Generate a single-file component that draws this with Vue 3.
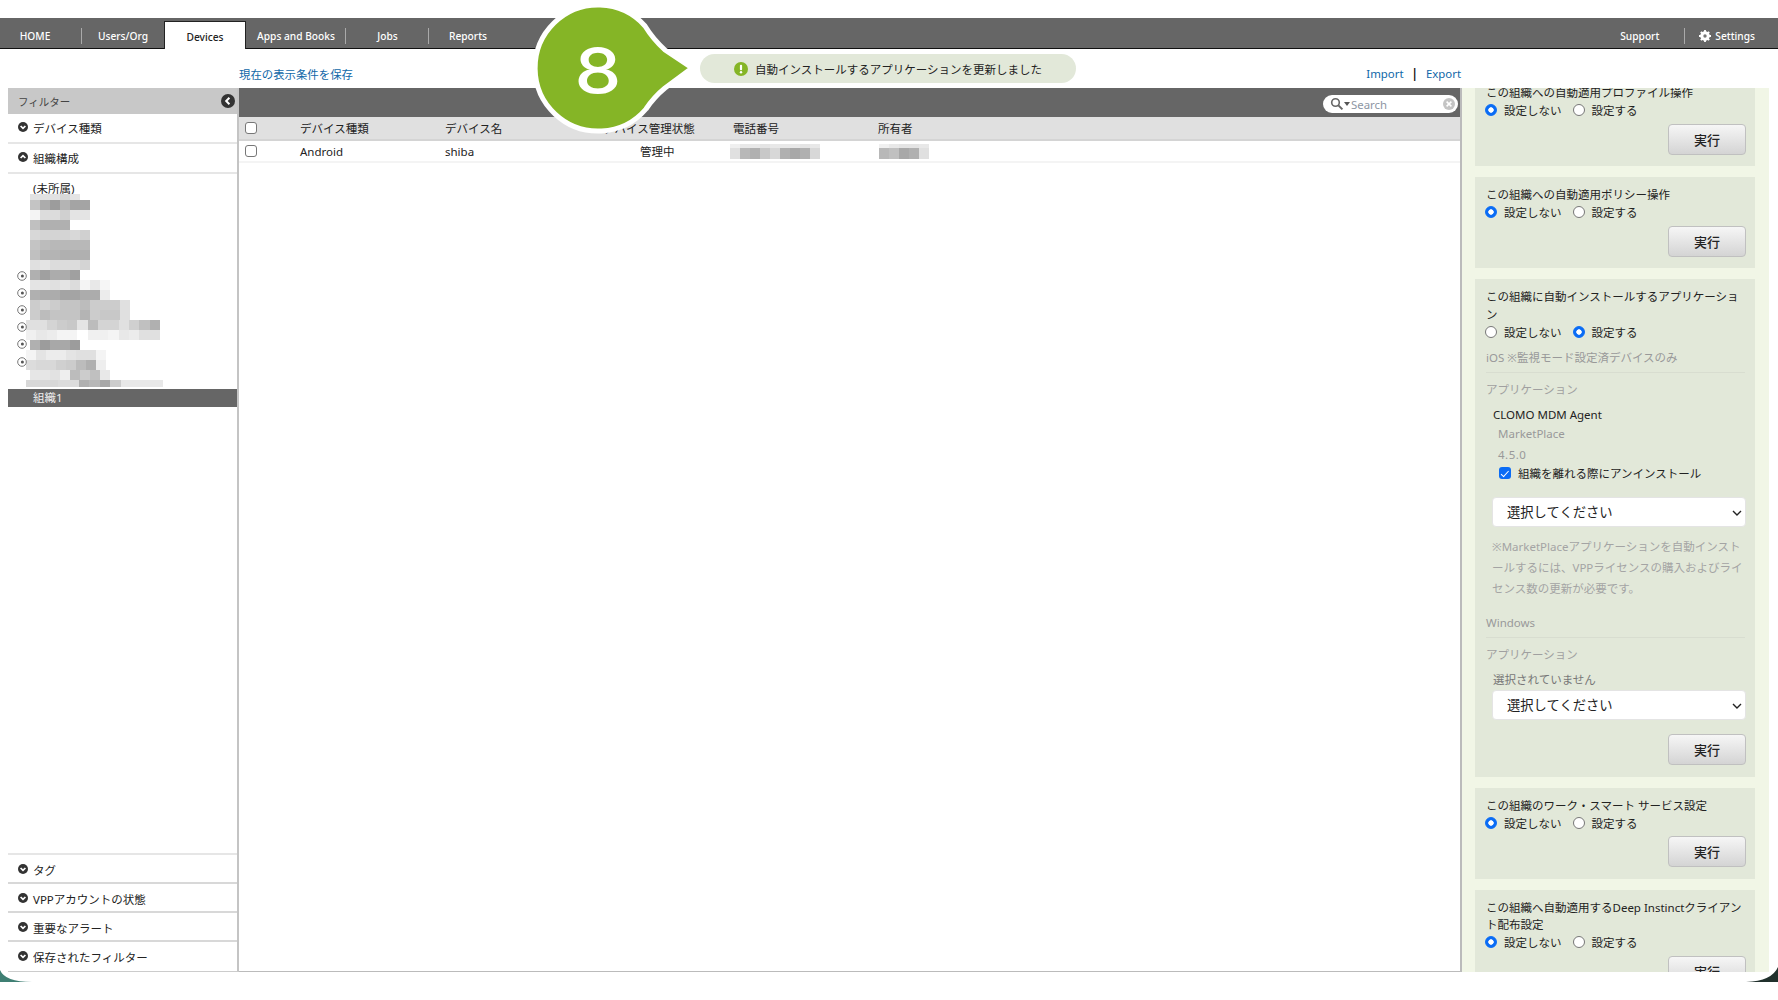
<script setup>
const navLeft = [
  { label: 'HOME', cls: 'home' },
  { label: 'Users/Org', cls: 'users' },
  { label: 'Devices', cls: 'active' },
  { label: 'Apps and Books', cls: 'apps' },
  { label: 'Jobs', cls: 'jobs' },
  { label: 'Reports', cls: 'reports' }
];

const bottomFilters = ['タグ', 'VPPアカウントの状態', '重要なアラート', '保存されたフィルター'];

// blurred org names, each row is a list of grey levels
const treeRows = [
  { h: 6, x: 30, c: ['e2', 'e2', 'e2', 'd8', 'e4'] },
  { h: 10, x: 30, c: ['c4', 'ac', '9c', 'b4', 'a4', 'a4'] },
  { h: 10, x: 30, c: ['f4', 'dc', 'dc', 'd0', 'e4', 'e4'] },
  { h: 10, x: 30, c: ['c0', 'b0', 'b0', 'b0'] },
  { h: 10, x: 30, c: ['d8', 'd4', 'd4', 'd4', 'd8', 'd0'] },
  { h: 10, x: 30, c: ['c4', 'bc', 'b8', 'b8', 'b8', 'b8'] },
  { h: 10, x: 30, c: ['c0', 'b4', 'b4', 'b0', 'b0', 'b0'] },
  { h: 10, x: 30, c: ['e0', 'e4', 'dc', 'dc', 'dc', 'd4'] },
  { h: 10, x: 30, c: ['b0', 'a0', 'ac', 'ac', 'a0'] },
  { h: 10, x: 30, c: ['e4', 'e4', 'e0', 'e4', 'dc', 'f4', 'e8', 'f6'] },
  { h: 10, x: 30, c: ['b0', 'ac', 'ac', 'a4', 'a4', 'ac', 'ac', 'ec'] },
  { h: 10, x: 30, c: ['cc', 'd4', 'cc', 'c4', 'c4', 'bc', 'cc', 'cc', 'cc', 'e0'] },
  { h: 10, x: 30, c: ['cc', 'bc', 'c4', 'c4', 'c4', 'b4', 'cc', 'c8', 'c8', 'e0'] },
  { h: 10, x: 26, w: 10.3, c: ['e0', 'e0', 'd4', 'cc', 'c8', 'e4', 'bc', 'd4', 'd4', 'e0', 'd0', 'c0', 'b0'] },
  { h: 10, x: 26, w: 10.3, c: ['f0', 'e8', 'ec', 'f4', 'f4', 'ff', 'f0', 'f0', 'f4', 'e8', 'ec', 'e0', 'e0'] },
  { h: 10, x: 30, c: ['b0', '9c', 'a8', 'a8', '9c'] },
  { h: 10, x: 26, c: ['f4', 'e4', 'ec', 'ec', 'e4', 'e0', 'e0', 'f4'] },
  { h: 10, x: 26, c: ['dc', 'd8', 'd8', 'd0', 'cc', 'bc', 'b0', 'ee'] },
  { h: 10, x: 30, c: ['e6', 'e6', 'e2', 'ee', 'bc', 'cc', 'c0', 'e8'] },
  { h: 7, x: 26, w: 10.5, c: ['d8', 'd8', 'd8', 'dc', 'dc', 'b0', 'b8', 'a8', 'cc', 'e8', 'e8', 'e8', 'e8'] }
];
const treeToggles = [276, 293, 310, 327, 344, 362];

const phoneBlur = [
  ['f0', 'e8', 'e8', 'e4', 'e8', 'e8', 'e8', 'e4', 'e8'],
  ['e0', 'b8', 'b0', 'c8', 'd8', 'b0', 'a8', 'b0', 'd8']
];
const ownerBlur = [
  ['f0', 'e8', 'e4', 'e4', 'e8'],
  ['b8', 'c0', 'a8', 'b0', 'e0']
];

const cell = (g, w = 10) => ({ width: w + 'px', background: '#' + g + g + g });
</script>

<template>
  <div class="page">
    <nav class="topbar">
      <a v-for="n in navLeft" :key="n.label" :class="['tab', n.cls]">{{ n.label }}</a>
      <div class="nav-right">
        <a class="support">Support</a>
        <a class="settings">
          <svg width="12" height="12" viewBox="0 0 12 12">
            <circle cx="6" cy="6" r="4.8" fill="#fff" />
            <path d="M6 0v12M0 6h12M1.8 1.8l8.4 8.4M10.2 1.8l-8.4 8.4" stroke="#fff" stroke-width="1.8" />
            <circle cx="6" cy="6" r="1.7" fill="#777" />
          </svg>
          Settings
        </a>
      </div>
    </nav>

    <div class="toolbar">
      <a class="link save">現在の表示条件を保存</a>
      <div class="toast">
        <svg width="14" height="14" viewBox="0 0 14 14">
          <circle cx="7" cy="7" r="7" fill="#85b526" />
          <rect x="5.9" y="2.8" width="2.2" height="5.4" rx="1" fill="#fff" />
          <circle cx="7" cy="10.3" r="1.2" fill="#fff" />
        </svg>
        自動インストールするアプリケーションを更新しました
      </div>
      <div class="io">
        <a class="link">Import</a><span class="bar">|</span><a class="link">Export</a>
      </div>
    </div>

    <div class="content">
      <aside class="sidebar">
        <div class="filter-head">
          フィルター
          <svg width="14" height="14" viewBox="0 0 14 14">
            <circle cx="7" cy="7" r="7" fill="#333" />
            <path d="M8.4 3.8 5.2 7l3.2 3.2" fill="none" stroke="#fff" stroke-width="2" />
          </svg>
        </div>
        <div class="filter-row">
          <svg class="chev" viewBox="0 0 10 10"><circle cx="5" cy="5" r="5" fill="#333" /><path d="M2.6 4 5 6.4 7.4 4" fill="none" stroke="#fff" stroke-width="1.7" /></svg>
          デバイス種類
        </div>
        <div class="filter-row">
          <svg class="chev" viewBox="0 0 10 10"><circle cx="5" cy="5" r="5" fill="#333" /><path d="M2.6 6 5 3.6 7.4 6" fill="none" stroke="#fff" stroke-width="1.7" /></svg>
          組織構成
        </div>
        <div class="tree">
          <div class="tree-none">(未所属)</div>
          <div v-for="(r, i) in treeRows" :key="i" class="mosaic" :style="{ height: r.h + 'px', marginLeft: r.x - 8 + 'px' }">
            <i v-for="(g, j) in r.c" :key="j" :style="cell(g, r.w)"></i>
          </div>
          <svg v-for="y in treeToggles" :key="y" class="toggle" :style="{ top: y - 179 + 'px' }" viewBox="0 0 10 10">
            <circle cx="5" cy="5" r="4.3" fill="#fff" stroke="#777" />
            <circle cx="5.4" cy="5" r="1.5" fill="#555" />
          </svg>
          <div class="tree-selected">組織1</div>
        </div>
        <div v-for="f in bottomFilters" :key="f" class="filter-row bottom">
          <svg class="chev" viewBox="0 0 10 10"><circle cx="5" cy="5" r="5" fill="#333" /><path d="M2.6 4 5 6.4 7.4 4" fill="none" stroke="#fff" stroke-width="1.7" /></svg>
          {{ f }}
        </div>
      </aside>

      <main class="main">
        <div class="main-bar">
          <div class="search">
            <svg width="14" height="14" viewBox="0 0 14 14">
              <circle cx="5.5" cy="5.5" r="3.8" fill="none" stroke="#666" stroke-width="1.6" />
              <path d="M8.4 8.4 12.4 12.4" stroke="#666" stroke-width="2" />
            </svg>
            <span class="caret"></span>
            <span class="search-text">Search</span>
            <svg class="clear" width="12" height="12" viewBox="0 0 12 12">
              <circle cx="6" cy="6" r="6" fill="#c4c4c4" />
              <path d="M3.6 3.6 8.4 8.4M8.4 3.6 3.6 8.4" stroke="#fff" stroke-width="1.5" />
            </svg>
          </div>
        </div>
        <div class="thead">
          <span class="col-check"><input type="checkbox" class="box" /></span>
          <span class="col-type">デバイス種類</span>
          <span class="col-name">デバイス名</span>
          <span class="col-state">デバイス管理状態</span>
          <span class="col-phone">電話番号</span>
          <span class="col-owner">所有者</span>
        </div>
        <div class="trow">
          <span class="col-check"><input type="checkbox" class="box" /></span>
          <span class="col-type">Android</span>
          <span class="col-name">shiba</span>
          <span class="col-state state-val">管理中</span>
          <span class="col-phone blur-cell">
            <div v-for="(r, i) in phoneBlur" :key="i" class="mosaic" :class="i ? 'tall' : 'short'">
              <i v-for="(g, j) in r" :key="j" :style="cell(g)"></i>
            </div>
          </span>
          <span class="col-owner blur-cell">
            <div v-for="(r, i) in ownerBlur" :key="i" class="mosaic" :class="i ? 'tall' : 'short'">
              <i v-for="(g, j) in r" :key="j" :style="cell(g)"></i>
            </div>
          </span>
        </div>
      </main>

      <section class="panel">
        <div class="panel-inner">
          <div class="card">
            <div class="card-title">この組織への自動適用プロファイル操作</div>
            <div class="radios">
              <label><input type="radio" name="r1" checked />設定しない</label>
              <label><input type="radio" name="r1" />設定する</label>
            </div>
            <div class="actions"><button>実行</button></div>
          </div>

          <div class="card">
            <div class="card-title">この組織への自動適用ポリシー操作</div>
            <div class="radios">
              <label><input type="radio" name="r2" checked />設定しない</label>
              <label><input type="radio" name="r2" />設定する</label>
            </div>
            <div class="actions"><button>実行</button></div>
          </div>

          <div class="card">
            <div class="card-title">この組織に自動インストールするアプリケーション</div>
            <div class="radios">
              <label><input type="radio" name="r3" />設定しない</label>
              <label><input type="radio" name="r3" checked />設定する</label>
            </div>
            <div class="os os-first">iOS ※監視モード設定済デバイスのみ</div>
            <div class="sub">アプリケーション</div>
            <div class="app-name">CLOMO MDM Agent</div>
            <div class="app-meta market">MarketPlace</div>
            <div class="app-meta version">4.5.0</div>
            <label class="uninstall"><input type="checkbox" class="box checked" checked />組織を離れる際にアンインストール</label>
            <div class="select-wrap first">
              <select><option>選択してください</option></select>
              <svg width="10" height="6" viewBox="0 0 10 6"><path d="M1 1 5 5 9 1" fill="none" stroke="#222" stroke-width="1.4" /></svg>
            </div>
            <p class="note">※MarketPlaceアプリケーションを自動インストールするには、VPPライセンスの購入およびライセンス数の更新が必要です。</p>
            <div class="os">Windows</div>
            <div class="sub">アプリケーション</div>
            <div class="none-selected">選択されていません</div>
            <div class="select-wrap second">
              <select><option>選択してください</option></select>
              <svg width="10" height="6" viewBox="0 0 10 6"><path d="M1 1 5 5 9 1" fill="none" stroke="#222" stroke-width="1.4" /></svg>
            </div>
            <div class="actions tall-gap"><button>実行</button></div>
          </div>

          <div class="card">
            <div class="card-title">この組織のワーク・スマート サービス設定</div>
            <div class="radios">
              <label><input type="radio" name="r4" checked />設定しない</label>
              <label><input type="radio" name="r4" />設定する</label>
            </div>
            <div class="actions"><button>実行</button></div>
          </div>

          <div class="card">
            <div class="card-title">この組織へ自動適用するDeep Instinctクライアント配布設定</div>
            <div class="radios">
              <label><input type="radio" name="r5" checked />設定しない</label>
              <label><input type="radio" name="r5" />設定する</label>
            </div>
            <div class="actions"><button>実行</button></div>
          </div>
        </div>
      </section>
    </div>

    <!-- step marker over the page -->
    <div class="marker">
      <svg width="180" height="136" viewBox="0 0 180 136">
        <path
          d="M122 25Q130 38 142 49L169 67L142 87Q131 96 123 108A63 63 0 1 1 122 25Z"
          fill="#85b526" stroke="#fff" stroke-width="5" stroke-linejoin="round"
        />
      </svg>
      <span class="marker-num">8</span>
    </div>

    <svg class="corner left" width="32" height="14" viewBox="0 0 32 14"><path d="M0 0Q5 12 32 12L0 12Z" fill="#3f7f73" /></svg>
    <svg class="corner right" width="32" height="16" viewBox="0 0 32 16"><path d="M32 0Q26 14 0 15L32 15Z" fill="#20302c" /></svg>
  </div>
</template>

<style>
html, body {
  margin: 0;
  background: #fff;
}
</style>

<style scoped>
.page {
  position: relative;
  width: 1778px;
  height: 1000px;
  padding-top: 18px;
  box-sizing: border-box;
  overflow: hidden;
  background: #fff;
  font-family: "Noto Sans", "Noto Sans CJK JP", sans-serif;
  font-size: 11.5px;
  color: #222;
}

.topbar {
  display: flex;
  height: 31px;
  background: #666;
  border-bottom: 1px solid #111;
  box-sizing: border-box;
  font-size: 10.2px;
  font-weight: 500;
  color: #fff;
}

.tab {
  display: flex;
  align-items: center;
  justify-content: center;
  position: relative;
  padding-top: 6px;
  box-sizing: border-box;
}
.tab.home { width: 82px; padding-right: 12px; }
.tab.users { width: 82px; }
.tab.active {
  width: 82px;
  height: 28px;
  margin-top: 3px;
  background: #fff;
  color: #222;
  border: 1px solid #222;
  border-bottom: none;
  padding-top: 2px;
  z-index: 1;
}
.tab.apps { width: 100px; }
.tab.jobs { width: 83px; }
.tab.reports { width: 78px; }
.tab.home::after,
.tab.apps::after,
.tab.jobs::after,
.nav-right .support::after {
  content: "";
  position: absolute;
  right: 0;
  top: 10px;
  height: 16px;
  width: 1px;
  background: #aaa;
}

.nav-right {
  display: flex;
  margin-left: auto;
}
.support {
  position: relative;
  display: flex;
  align-items: center;
  justify-content: center;
  padding: 6px 26px 0 0;
}
.settings {
  display: flex;
  align-items: center;
  gap: 4px;
  padding: 6px 23px 0 14px;
}

.toolbar {
  display: flex;
  align-items: center;
  height: 39px;
  padding: 10px 317px 0 239px;
  box-sizing: border-box;
  position: relative;
}
.link {
  color: #0f67a8;
  font-size: 11.4px;
}
.toast {
  position: absolute;
  left: 700px;
  top: 5px;
  width: 376px;
  height: 29px;
  display: flex;
  align-items: center;
  gap: 7px;
  padding-left: 34px;
  box-sizing: border-box;
  background: #e2e8d9;
  border-radius: 15px;
}
.io {
  margin-left: auto;
  display: flex;
  align-items: center;
}
.bar {
  margin: 0 8px;
  color: #111;
  font-weight: 700;
}

.content {
  display: flex;
  height: 884px;
  padding-left: 8px;
}

.sidebar {
  width: 231px;
  display: flex;
  flex-direction: column;
  border-right: 2px solid #c4c4c4;
  border-bottom: 1px solid #ccc;
  box-sizing: border-box;
  height: 884px;
}
.filter-head {
  display: flex;
  align-items: center;
  justify-content: space-between;
  height: 26px;
  padding: 0 2px 0 10px;
  flex: none;
  background: #c8c8c8;
  color: #444;
  font-size: 10.5px;
}
.filter-row {
  display: flex;
  align-items: center;
  gap: 5px;
  height: 30px;
  padding-left: 10px;
  flex: none;
  box-sizing: border-box;
  border-bottom: 2px solid #e6e6e6;
}
.filter-row.bottom {
  height: 29px;
  padding-top: 2px;
  border-bottom-color: #d8d8d8;
}
.filter-row.bottom:last-child {
  padding-top: 0;
  border-bottom: none;
}
.chev {
  width: 10px;
  height: 10px;
  margin-top: -2px;
  flex: none;
}

.tree {
  position: relative;
  flex: 1;
  padding-top: 8px;
  border-bottom: 2px solid #e6e6e6;
}
.tree-none {
  height: 12px;
  line-height: 14px;
  padding-left: 25px;
  color: #222;
}
.mosaic {
  display: flex;
}
.mosaic i {
  display: block;
  height: 100%;
}
.toggle {
  position: absolute;
  left: 9px;
  width: 10px;
  height: 10px;
}
.tree-selected {
  height: 18px;
  margin-top: 2px;
  line-height: 18px;
  padding-left: 25px;
  background: #666;
  color: #eee;
}

.main {
  width: 1223px;
  border-right: 2px solid #bbb;
  border-bottom: 1px solid #bbb;
  box-sizing: border-box;
  height: 884px;
  flex: none;
}
.main-bar {
  display: flex;
  justify-content: flex-end;
  align-items: flex-start;
  height: 29px;
  padding: 7px 2px 0 0;
  box-sizing: border-box;
  background: #666;
}
.search {
  display: flex;
  align-items: center;
  width: 135px;
  height: 18px;
  padding: 0 3px 0 7px;
  box-sizing: border-box;
  background: #fff;
  border-radius: 9px;
}
.caret {
  width: 0;
  height: 0;
  margin: 0 1px 0 0;
  border: 3px solid transparent;
  border-top: 4px solid #555;
  border-bottom: none;
}
.search-text {
  color: #8d96a3;
  font-size: 11.4px;
}
.clear {
  margin-left: auto;
}

.thead,
.trow {
  display: flex;
  align-items: center;
}
.thead {
  height: 24px;
  background: #e0e0e0;
  border-bottom: 2px solid #d4d4d4;
  box-sizing: border-box;
}
.trow {
  height: 22px;
  border-bottom: 2px solid #f4f4f4;
  box-sizing: border-box;
}
.col-check { width: 61px; padding-left: 6px; box-sizing: border-box; display: flex; }
.col-type { width: 145px; }
.col-name { width: 158px; }
.col-state { width: 130px; }
.state-val { padding-left: 37px; box-sizing: border-box; }
.col-phone { width: 145px; }
.col-owner { width: 145px; }
.blur-cell { display: block; }
.col-phone.blur-cell .mosaic { margin-left: -3px; }
.col-owner.blur-cell .mosaic { margin-left: 1px; }
.mosaic.short { height: 4px; }
.mosaic.tall { height: 11px; }

.box {
  appearance: none;
  width: 12px;
  height: 12px;
  margin: 0;
  box-sizing: border-box;
  border: 1px solid #777;
  border-radius: 3px;
  background: #fff;
}
.box.checked {
  position: relative;
  border: none;
  background: #0a6cf5;
}
.box.checked::after {
  content: "";
  position: absolute;
  left: 4px;
  top: 1.5px;
  width: 3px;
  height: 6.5px;
  border: solid #fff;
  border-width: 0 1.6px 1.6px 0;
  transform: rotate(42deg);
}

.panel {
  width: 307px;
  flex: none;
  overflow: hidden;
  background: #f1f6e6;
}
.panel-inner {
  margin-top: -13px;
  padding: 0 14px 0 13px;
  display: flex;
  flex-direction: column;
  gap: 11px;
}
.card {
  padding: 9px 10px 11.5px 11px;
  background: #e2e8d9;
  flex: none;
}
.card-title {
  line-height: 17.5px;
  color: #222;
}
.radios {
  display: flex;
  gap: 12px;
  height: 17px;
  align-items: center;
}
.radios label {
  display: flex;
  align-items: center;
  gap: 7px;
}
.radios input {
  appearance: none;
  width: 12px;
  height: 12px;
  margin: 0 0 0 -1px;
  box-sizing: border-box;
  border: 1px solid #777;
  border-radius: 50%;
  background: #fff;
}
.radios input:checked {
  border: 1px solid #0a6cf5;
  background: radial-gradient(circle, #fff 0 2.4px, #0a6cf5 3px);
}
.actions {
  display: flex;
  justify-content: flex-end;
  margin-top: 5px;
}
.actions.tall-gap {
  margin-top: 14px;
}
button {
  width: 78px;
  height: 31px;
  padding: 0;
  margin-right: -1px;
  border: 1px solid #c0c0c0;
  border-radius: 4px;
  background: linear-gradient(#f6f6f6, #d4d4d4);
  font: 500 13px "Noto Sans", "Noto Sans CJK JP", sans-serif;
  color: #222;
}

.os {
  margin-top: 9px;
  height: 25px;
  line-height: 22px;
  color: #999;
  border-bottom: 1px solid #d8ddd0;
}
.os-first {
  margin-top: 7px;
}
.sub {
  margin-top: 8px;
  line-height: 18px;
  color: #a0a0a0;
}
.app-name {
  margin-top: 6px;
  padding-left: 7px;
  line-height: 19px;
  color: #222;
}
.app-meta {
  padding-left: 12px;
  color: #999;
  line-height: 20px;
}
.version {
  line-height: 21px;
  letter-spacing: 0.5px;
}
.uninstall {
  display: flex;
  align-items: center;
  gap: 7px;
  padding-left: 13px;
  height: 16px;
}
.select-wrap {
  position: relative;
  margin: 0 -1px 0 6px;
  height: 30px;
}
.select-wrap.first {
  margin-top: 16px;
}
.select-wrap.second {
  margin-top: 2px;
}
.select-wrap svg {
  position: absolute;
  right: 4px;
  top: 13px;
}
select {
  appearance: none;
  width: 100%;
  height: 30px;
  padding: 0 14px;
  box-sizing: border-box;
  background: #fff;
  border: 1px solid #e4e4e4;
  border-radius: 4px;
  font: 13.3px "Noto Sans", "Noto Sans CJK JP", sans-serif;
  color: #222;
}
.note {
  margin: 9px 0 0 6px;
  line-height: 21px;
  color: #a4a4a4;
}
.note + .os {
  margin-top: 13px;
}
.none-selected {
  margin-top: 7px;
  padding-left: 7px;
  line-height: 17px;
  color: #777;
}

.marker {
  position: absolute;
  left: 523px;
  top: 1px;
  z-index: 5;
}
.marker svg {
  display: block;
}
.marker-num {
  position: absolute;
  left: 52px;
  top: 25px;
  width: 46px;
  text-align: center;
  font: 500 62px/90px Inter, sans-serif;
  color: #fff;
  transform: scaleX(1.2);
}

.corner {
  position: absolute;
}
.corner.left {
  left: 0;
  top: 970px;
}
.corner.right {
  right: 0;
  top: 967px;
}
</style>
